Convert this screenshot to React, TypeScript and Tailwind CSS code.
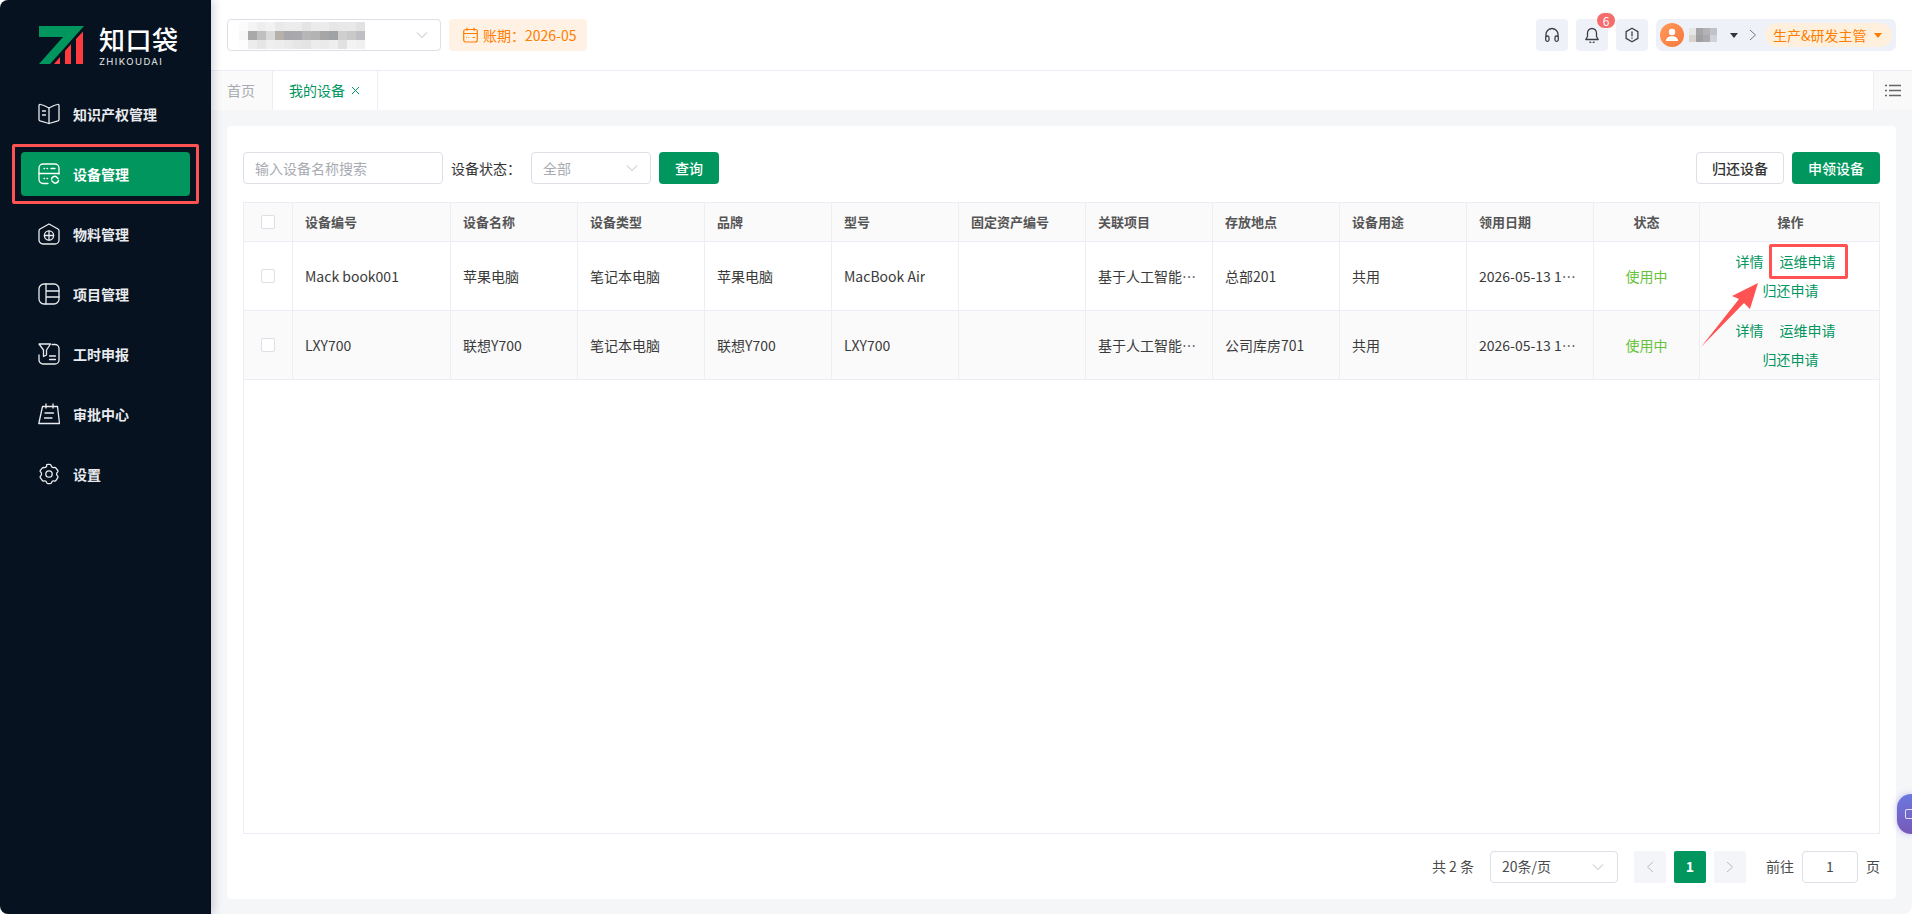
const cjk = "font-['Noto_Sans_CJK_SC','Noto_Sans',sans-serif]";

const columns = [
  { label: "设备编号", key: "code" },
  { label: "设备名称", key: "name" },
  { label: "设备类型", key: "type" },
  { label: "品牌", key: "brand" },
  { label: "型号", key: "model" },
  { label: "固定资产编号", key: "asset" },
  { label: "关联项目", key: "project" },
  { label: "存放地点", key: "place" },
  { label: "设备用途", key: "usage" },
  { label: "领用日期", key: "date" },
] as const;

const rows = [
  {
    code: "Mack book001",
    name: "苹果电脑",
    type: "笔记本电脑",
    brand: "苹果电脑",
    model: "MacBook Air",
    asset: "",
    project: "基于人工智能研发项目",
    place: "总部201",
    usage: "共用",
    date: "2026-05-13 10:20:30",
    boxed: true,
  },
  {
    code: "LXY700",
    name: "联想Y700",
    type: "笔记本电脑",
    brand: "联想Y700",
    model: "LXY700",
    asset: "",
    project: "基于人工智能研发项目",
    place: "公司库房701",
    usage: "共用",
    date: "2026-05-13 10:20:30",
    boxed: false,
  },
];

const gridCols =
  "grid grid-cols-[49px_158px_127px_127px_127px_127px_127px_127px_127px_127px_127px_106px_181px]";

const menu = [
  { label: "知识产权管理", icon: <BookIcon /> },
  { label: "设备管理", icon: <DeviceIcon />, active: true },
  { label: "物料管理", icon: <BoxIcon /> },
  { label: "项目管理", icon: <ProjectIcon /> },
  { label: "工时申报", icon: <FilterIcon /> },
  { label: "审批中心", icon: <CalendarIcon /> },
  { label: "设置", icon: <GearIcon /> },
];

function Svg({ children, size = 22 }: { children: React.ReactNode; size?: number }) {
  return (
    <svg
      width={size}
      height={size}
      viewBox="0 0 22 22"
      fill="none"
      stroke="currentColor"
      strokeWidth="1.3"
      strokeLinecap="round"
      strokeLinejoin="round"
      className="shrink-0"
    >
      {children}
    </svg>
  );
}

function BookIcon() {
  return (
    <Svg>
      <path d="M11 5 6 2.5 2.5 1.5A1 1 0 0 0 1 2.5v14a1.5 1.5 0 0 0 1 1.3L11 20.5l9-2.7a1.5 1.5 0 0 0 1-1.3v-14a1 1 0 0 0-1.5-1L16 2.5 11 5Z" />
      <path d="M11 5v15.5M4.5 8h3M4.5 12h3" />
    </Svg>
  );
}

function DeviceIcon() {
  return (
    <Svg>
      <path d="M10 20.5H5a4 4 0 0 1-4-4V5a4 4 0 0 1 4-4h12a4 4 0 0 1 4 4v6" />
      <path d="M1 10.5h20M6 5.5h.6M9 5.5h.6M13 5.5h4M6 15.5h.6M9 15.5h.6" />
      <path d="M13.5 16a3.2 3.2 0 0 1 5.8-1.2l.7.8M20.5 17.5a3.2 3.2 0 0 1-5.8 1.2l-.7-.8" strokeWidth="1.5" />
    </Svg>
  );
}

function BoxIcon() {
  return (
    <Svg>
      <path d="M11 1 20 6a2 2 0 0 1 1 1.7V17a4 4 0 0 1-4 4H5a4 4 0 0 1-4-4V7.7A2 2 0 0 1 2 6l9-5Z" />
      <circle cx="11" cy="12.5" r="4.6" />
      <path d="M6.4 12.5h9.2M11 7.9v9.2" />
    </Svg>
  );
}

function ProjectIcon() {
  return (
    <Svg>
      <rect x="1" y="1" width="20" height="20" rx="5" />
      <path d="M8 1v20M8 8h13M8 14h13" />
    </Svg>
  );
}

function FilterIcon() {
  return (
    <Svg>
      <path d="M14 1.5h3a4 4 0 0 1 4 4V17a4 4 0 0 1-4 4H5a4 4 0 0 1-4-4v-5" />
      <path d="M1 1h11.5L8.5 7v5l-3 1.5V7L1 1Z" />
      <path d="M11.5 13h6M11.5 16.5h6" />
    </Svg>
  );
}

function CalendarIcon() {
  return (
    <Svg>
      <path d="M4.5 3.5h15l2 17H0.8L4.5 3.5Z" />
      <path d="M8 1v4M15 1v4M7 10h8.5M6.5 15h7.5" />
    </Svg>
  );
}

function GearIcon() {
  return (
    <Svg>
      <path d="M8.6 1.6a2 2 0 0 0 .2 1.2 2.5 2.5 0 0 1-3 1.7 2.4 2.4 0 0 0-1.6.6L2.3 7.4c-.5.7-.2 1.3.3 1.7a2.4 2.4 0 0 1 0 3.8c-.5.4-.8 1-.3 1.7L4.2 17.400c.4.6 1 .7 1.6.6a2.500 2.500 0 0 1 3 1.700c.2.600.7 1 1.300 1h2c.6 0 1.100-.4 1.300-1a2.500 2.500 0 0 1 3-1.700c.6.100 1.200 0 1.600-.6l1.800-2.700c.5-.7.200-1.300-.3-1.700a2.400 2.400 0 0 1 0-3.800c.5-.4.800-1 .3-1.700L18 5.100a1.800 1.800 0 0 0-1.800-.6 2.500 2.500 0 0 1-3-1.700C13 1.800 12.500 1.300 11.900 1.300h-2c-.6 0-1.100 0-1.300.3Z" />
      <circle cx="11" cy="11" r="3.200" />
    </Svg>
  );
}

function Chevron({ className = "" }: { className?: string }) {
  return (
    <svg width="14" height="14" viewBox="0 0 14 14" fill="none" stroke="currentColor" strokeWidth="1" className={className}>
      <path d="M2 4.500 7 9.500l5-5" />
    </svg>
  );
}

function Mosaic({ colors, cell = 9 }: { colors: string[][]; cell?: number }) {
  return (
    <div className="flex flex-col">
      {colors.map((row, y) => (
        <div key={y} className="flex">
          {row.map((c, x) => (
            <div key={x} style={{ width: cell, height: cell, backgroundColor: c }} />
          ))}
        </div>
      ))}
    </div>
  );
}

const companyBlur = [
  ["#fbfbfb", "#f4f4f4", "#eeeeee", "#f2f2f2", "#e9e9e9", "#ececec", "#ececec", "#e4e4e4", "#ebebeb", "#ececec", "#e6e6e6", "#e8e8e8", "#e9e9e9", "#e2e2e2"],
  ["#f7f7f7", "#a9a9a9", "#c0c0c0", "#dadada", "#b6b0aa", "#a8a8ac", "#a9a9ad", "#b6b6b6", "#b3b3b3", "#a6a6a6", "#a0a3a6", "#cfcfcf", "#c9c9c9", "#bfbfc3"],
  ["#fdfdfd", "#ececec", "#e6e6e6", "#efefef", "#ededed", "#eaeaea", "#e6e6e6", "#e4e4e4", "#ececec", "#eaeaea", "#eeeeee", "#e1e1e1", "#f3f3f3", "#f0f0f0"],
];

const userBlur = [
  ["#e6e6e6", "#a5a5a8", "#b3b3b6", "#c2c2c6"],
  ["#d8d4d0", "#a0a0a3", "#aaaaae", "#cfd2d8"],
];

function Sidebar() {
  return (
    <aside className="w-[211px] shrink-0 bg-[#061220] shadow-[3px_0_8px_rgba(30,40,70,0.18)] z-10">
      <div className="h-[92px] pl-[39px] pt-[26px] flex gap-[15px]">
        <svg width="45" height="38" viewBox="0 0 45 38" className="shrink-0">
          <path d="M0 0h45L11 38H0l24-27H0V0Z" fill="#00965e" />
          <path d="M15 38l6-7v7h-6ZM26 25l6-7v20h-6V25ZM37 13l7-7.500V38h-7V13Z" fill="#ff3b3f" />
        </svg>
        <div className="text-white">
          <div className={`${cjk} text-[26px] leading-[26px] font-medium tracking-[0.5px]`}>知口袋</div>
          <div className="font-['Inter',sans-serif] text-[9.500px] leading-[12px] tracking-[1.400px] mt-[4px] text-[#e8e8e8]">
            ZHIKOUDAI
          </div>
        </div>
      </div>
      <nav className="flex flex-col gap-[16px] px-[21px]">
        {menu.map((m) => (
          <div
            key={m.label}
            className={`relative h-[44px] flex items-center pl-[17px] gap-[13px] rounded-[4px] text-[14px] font-bold ${
              m.active ? "bg-[#00965e] text-white" : "text-[#e9ebee]"
            }`}
          >
            {m.icon}
            <span>{m.label}</span>
            {m.active && (
              <div className="absolute -left-[9px] -right-[9px] -top-[8px] -bottom-[8px] border-[3px] border-[#ff5252] rounded-[2px]" />
            )}
          </div>
        ))}
      </nav>
    </aside>
  );
}

function Header() {
  return (
    <header className="h-[71px] shrink-0 bg-white border-b border-[#ebeef5] flex items-center pl-[16px] pr-[16px]">
      <div className="w-[214px] h-[32px] border border-[#dcdfe6] rounded-[4px] flex items-center justify-between pl-[11px] pr-[11px]">
        <Mosaic colors={companyBlur} />
        <Chevron className="text-[#b8bcc4]" />
      </div>
      <div className="ml-[8px] w-[138px] h-[32px] rounded-[4px] bg-[#fff1e3] text-[#ff7d00] text-[14px] flex items-center pl-[14px] gap-[5px]">
        <svg width="15" height="16" viewBox="0 0 15 16" fill="none" stroke="currentColor" strokeWidth="1.200">
          <rect x="0.700" y="2.500" width="13.600" height="12.500" rx="2" />
          <path d="M0.700 6.500h13.600M4 0.700v3M11 0.700v3M3 10.500h.8M5.500 10.500h.8M9.500 10.500h2.500" />
        </svg>
        <span>账期：2026-05</span>
      </div>
      <div className="ml-auto flex items-center gap-[8px]">
        <IconBtn>
          <svg width="16" height="16" viewBox="0 0 16 16" fill="none" stroke="#3c3f45" strokeWidth="1.300">
            <path d="M2 10V7.500a6 6 0 0 1 12 0V10" />
            <rect x="1.700" y="9" width="3.300" height="5.300" rx="1.500" />
            <rect x="11" y="9" width="3.300" height="5.300" rx="1.500" />
          </svg>
        </IconBtn>
        <div className="relative">
          <IconBtn>
            <svg width="16" height="16" viewBox="0 0 16 16" fill="none" stroke="#3c3f45" strokeWidth="1.300" strokeLinejoin="round">
              <path d="M8 1.500a4.500 4.500 0 0 0-4.500 4.500v3.500L1.800 12.500h12.400L12.500 9.500V6A4.500 4.500 0 0 0 8 1.500Z" />
              <path d="M6 14.500a2 2 0 0 0 4 0" />
            </svg>
          </IconBtn>
          <div className="absolute left-[20px] -top-[7px] h-[17px] w-[20px] rounded-full bg-[#f56c6c] border border-white text-white text-[12px] leading-[15px] text-center">
            6
          </div>
        </div>
        <IconBtn>
          <svg width="16" height="16" viewBox="0 0 16 16" fill="none" stroke="#3c3f45" strokeWidth="1.300" strokeLinecap="round">
            <path d="M8 1.200 13.900 4.600v6.800L8 14.800 2.100 11.400V4.600L8 1.200Z" strokeLinejoin="round" />
            <path d="M8 4.800v4M8 11v.2" />
          </svg>
        </IconBtn>
        <div className="w-[240px] h-[32px] rounded-[6px] bg-[#eef1f8] flex items-center pl-[4px] pr-[4px]">
          <div className="w-[24px] h-[24px] rounded-full bg-gradient-to-br from-[#ff9a5c] to-[#f7763a] flex items-center justify-center">
            <svg width="14" height="14" viewBox="0 0 14 14" fill="white">
              <circle cx="7" cy="4" r="3.200" />
              <path d="M1 13c0-3 2.500-4.800 6-4.800s6 1.800 6 4.800H1Z" />
            </svg>
          </div>
          <div className="ml-[5px]">
            <Mosaic colors={userBlur} cell={7} />
          </div>
          <div className="ml-[13px] w-0 h-0 border-l-[4px] border-r-[4px] border-t-[5px] border-l-transparent border-r-transparent border-t-[#33363c]" />
          <svg width="8" height="12" viewBox="0 0 8 12" fill="none" stroke="#777" strokeWidth="1" className="ml-[11px]">
            <path d="M1 1l5.500 5L1 11" />
          </svg>
          <div className="ml-[8px] flex-1 h-[24px] rounded-full bg-[#fef0dc] text-[#ff7d00] text-[14px] flex items-center pl-[8px] gap-[7px]">
            <span>生产&amp;研发主管</span>
            <div className="w-0 h-0 border-l-[4px] border-r-[4px] border-t-[5px] border-l-transparent border-r-transparent border-t-[#ff7d00]" />
          </div>
        </div>
      </div>
    </header>
  );
}

function IconBtn({ children }: { children: React.ReactNode }) {
  return <div className="w-[32px] h-[32px] rounded-[4px] bg-[#eef1f8] flex items-center justify-center">{children}</div>;
}

function Tabs() {
  return (
    <div className="h-[39px] shrink-0 bg-white flex text-[14px]">
      <div className="w-[62px] bg-[#fafafa] border-r border-[#ebeef5] text-[#a8abb2] flex items-center pl-[16px]">首页</div>
      <div className="w-[105px] border-r border-[#ebeef5] text-[#00965e] flex items-center pl-[16px] gap-[6px]">
        <span>我的设备</span>
        <svg width="9" height="9" viewBox="0 0 9 9" stroke="currentColor" strokeWidth="1" fill="none">
          <path d="M1 1l7 7M8 1 1 8" />
        </svg>
      </div>
      <div className="ml-auto w-[39px] bg-[#f9f9f9] border-l border-[#ebeef5] flex items-center justify-center">
        <svg width="16" height="13" viewBox="0 0 16 13" stroke="#666" strokeWidth="1.500">
          <path d="M0 1.500h2M4 1.500h12M0 6.500h2M4 6.500h12M0 11.500h2M4 11.500h12" />
        </svg>
      </div>
    </div>
  );
}

function Checkbox() {
  return <div className="w-[14px] h-[14px] bg-white border border-[#dcdfe6] rounded-[2px]" />;
}

function DeviceTable() {
  return (
    <div className="flex-1 border border-[#ebeef5] flex flex-col text-[14px] text-[#3a3a3a]">
      <div className={`${gridCols} h-[39px] bg-[#fafafa] text-[13px] font-bold text-[#555] border-b border-[#ebeef5]`}>
        <div className="flex items-center justify-center border-r border-[#ebeef5]">
          <Checkbox />
        </div>
        {columns.map((c) => (
          <div key={c.key} className="flex items-center px-[12px] border-r border-[#ebeef5]">
            {c.label}
          </div>
        ))}
        <div className="flex items-center justify-center border-r border-[#ebeef5]">状态</div>
        <div className="flex items-center justify-center">操作</div>
      </div>
      {rows.map((r, i) => (
        <div key={r.code} className={`${gridCols} h-[69px] border-b border-[#ebeef5] ${i % 2 ? "bg-[#fafafa]" : "bg-white"}`}>
          <div className="flex items-center justify-center border-r border-[#ebeef5]">
            <Checkbox />
          </div>
          {columns.map((c) => (
            <div key={c.key} className="flex items-center px-[12px] border-r border-[#ebeef5] min-w-0">
              <span className="truncate">{r[c.key]}</span>
            </div>
          ))}
          <div className="flex items-center justify-center border-r border-[#ebeef5] text-[#67c23a]">使用中</div>
          <div className="relative flex items-center">
            <div className="w-full px-[10px] text-center leading-[29px] text-[#00965e]">
              <span className="inline-block mr-[16px]">详情</span>
              <span className="inline-block mr-[10px]">运维申请</span>
              <span className="inline-block">归还申请</span>
            </div>
            {r.boxed && (
              <>
                <div className="absolute left-[69px] top-[2px] w-[79px] h-[35px] border-[3px] border-[#ff5252] rounded-[2px]" />
                <svg width="60" height="66" viewBox="0 0 60 66" className="absolute left-0 top-[40px] z-10">
                  <path d="M1 65 39 17 32 14 58 1 50 27 44 21 1 65Z" fill="#ff5252" />
                </svg>
              </>
            )}
          </div>
        </div>
      ))}
    </div>
  );
}

function Pagination() {
  return (
    <div className="h-[65px] shrink-0 flex items-center justify-end text-[14px] text-[#4a4a4a]">
      <span>共 2 条</span>
      <div className="ml-[16px] w-[128px] h-[32px] border border-[#dcdfe6] rounded-[4px] flex items-center justify-between pl-[11px] pr-[12px]">
        <span>20条/页</span>
        <Chevron className="text-[#b8bcc4]" />
      </div>
      <div className="ml-[16px] w-[32px] h-[32px] rounded-[2px] bg-[#f4f5f8] flex items-center justify-center text-[#b8bcc4]">
        <svg width="8" height="12" viewBox="0 0 8 12" fill="none" stroke="currentColor"><path d="M7 1 1.500 6 7 11" /></svg>
      </div>
      <div className="ml-[8px] w-[32px] h-[32px] rounded-[2px] bg-[#00965e] text-white font-bold flex items-center justify-center">1</div>
      <div className="ml-[8px] w-[32px] h-[32px] rounded-[2px] bg-[#f4f5f8] flex items-center justify-center text-[#b8bcc4]">
        <svg width="8" height="12" viewBox="0 0 8 12" fill="none" stroke="currentColor"><path d="M1 1l5.500 5L1 11" /></svg>
      </div>
      <span className="ml-[20px]">前往</span>
      <div className="ml-[8px] w-[56px] h-[32px] border border-[#dcdfe6] rounded-[4px] flex items-center justify-center">1</div>
      <span className="ml-[8px]">页</span>
    </div>
  );
}

export default function App() {
  return (
    <div className={`${cjk} relative w-[1912px] h-[914px] flex overflow-hidden rounded-[8px] bg-white`}>
      <Sidebar />
      <main className="flex-1 min-w-0 flex flex-col bg-[#f5f6f8]">
        <Header />
        <Tabs />
        <div className="flex-1 min-h-0 flex flex-col pt-[16px] pb-[15px] px-[16px]">
          <div className="flex-1 min-h-0 bg-white rounded-[4px] flex flex-col px-[16px]">
            <div className="h-[76px] shrink-0 flex items-center pt-[8px] pb-[0px] text-[14px]">
              <div className="w-[200px] h-[32px] border border-[#dcdfe6] rounded-[4px] flex items-center pl-[11px] text-[#a8abb2]">
                输入设备名称搜索
              </div>
              <span className="ml-[8px] text-[#333]">设备状态：</span>
              <div className="ml-[10px] w-[120px] h-[32px] border border-[#dcdfe6] rounded-[4px] flex items-center justify-between pl-[11px] pr-[11px] text-[#a8abb2]">
                <span>全部</span>
                <Chevron className="text-[#b8bcc4]" />
              </div>
              <div className="ml-[8px] w-[60px] h-[32px] rounded-[4px] bg-[#00965e] text-white font-medium flex items-center justify-center">
                查询
              </div>
              <div className="ml-auto w-[88px] h-[32px] border border-[#dcdfe6] rounded-[4px] text-[#333] font-medium flex items-center justify-center">
                归还设备
              </div>
              <div className="ml-[8px] w-[88px] h-[32px] rounded-[4px] bg-[#00965e] text-white font-medium flex items-center justify-center">
                申领设备
              </div>
            </div>
            <DeviceTable />
            <Pagination />
          </div>
        </div>
      </main>
      <div className="absolute right-0 top-[794px] w-[15px] h-[40px] rounded-l-[14px] bg-gradient-to-b from-[#6a78e0] to-[#7658b8] shadow-[0_0_6px_rgba(100,100,220,0.4)] flex items-center pl-[8px]">
        <div className="w-[8px] h-[10px] border border-white/80 border-r-0 rounded-l-[2px]" />
      </div>
    </div>
  );
}
